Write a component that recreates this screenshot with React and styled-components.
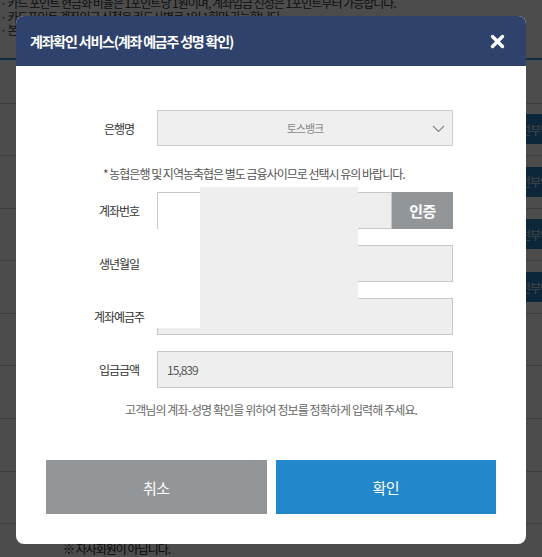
import styled, { createGlobalStyle } from "styled-components";

const GlobalStyle = createGlobalStyle`
  html, body {
    margin: 0;
    padding: 0;
  }
  body {
    background: #fff;
    width: 542px;
    height: 557px;
    overflow: hidden;
    font-family: "Noto Sans CJK KR", "Noto Sans", sans-serif;
  }
`;

/* page behind the dimmed overlay */
const Page = styled.div`
  width: 600px;
  color: #333;
  font-size: 12px;
  letter-spacing: -1px;
`;

const NoticeList = styled.ul`
  margin: -4px 0 0;
  padding: 0;
  list-style: none;
  line-height: 13.5px;
`;

const Notice = styled.li`
  white-space: nowrap;
  &::before {
    content: "· ";
  }
`;

const Table = styled.div`
  margin-top: 21px;
  border-top: 2px solid #3a9ad6;
`;

const Row = styled.div`
  box-sizing: border-box;
  height: ${(p) => (p.$first ? "44px" : "52.6px")};
  border-bottom: 1px solid #cfcfcf;
  display: flex;
  align-items: center;
  padding: 0 0 0 63px;
`;

const RowButton = styled.span`
  margin-left: auto;
  margin-right: 12px;
  width: 78px;
  height: 30px;
  background: #2a7fc4;
  color: #e8e8e8;
  font-size: 12px;
  display: flex;
  align-items: center;
  padding-left: 10px;
  box-sizing: border-box;
`;

const FooterNote = styled.div`
  padding: 16px 0 0 63px;
  color: #222;
`;

/* modal */
const Overlay = styled.div`
  position: fixed;
  inset: 0;
  background: rgba(0, 0, 0, 0.7);
  display: flex;
  justify-content: center;
  align-items: flex-start;
  padding-top: 16px;
`;

const Modal = styled.div`
  position: relative;
  width: 510px;
  background: #fff;
  border-radius: 8px;
  overflow: hidden;
  letter-spacing: -1px;
`;

const Header = styled.div`
  height: 50px;
  background: #2f426c;
  display: flex;
  align-items: center;
  justify-content: space-between;
  padding: 0 21px 0 14px;
`;

const Title = styled.h2`
  margin: 0;
  color: #fff;
  font-size: 14px;
  font-weight: 700;
  letter-spacing: -1.2px;
`;

const CloseButton = styled.button`
  border: 0;
  padding: 0;
  background: none;
  width: 15px;
  height: 15px;
  display: flex;
`;

const Body = styled.div`
  padding: 44px 0 30px;
`;

const Field = styled.div`
  display: grid;
  grid-template-columns: 76px 296px;
  align-items: center;
  padding-left: 65px;
  margin-top: ${(p) => p.$gap || 0}px;
`;

const Label = styled.label`
  text-align: center;
  font-size: 12px;
  color: #333;
`;

const Select = styled.div`
  box-sizing: border-box;
  height: 36px;
  background: #efefef;
  border: 1px solid #cdcdcd;
  display: flex;
  align-items: center;
  justify-content: center;
  position: relative;
  font-size: 11px;
  color: #888;
  svg {
    position: absolute;
    right: 7px;
    top: 14px;
  }
`;

const InputWrap = styled.div`
  display: flex;
  height: 37px;
`;

const Input = styled.div`
  flex: 1;
  box-sizing: border-box;
  height: 37px;
  background: #eeeeee;
  border: 1px solid #c8c8c8;
  display: flex;
  align-items: center;
  padding-left: 9px;
  font-size: 12px;
  color: #555;
`;

const AuthButton = styled.button`
  width: 61px;
  border: 0;
  background: #939699;
  color: #fff;
  font-family: inherit;
  font-size: 15px;
  font-weight: 700;
  letter-spacing: -0.5px;
`;

const Note = styled.p`
  margin: 19px 0 9px;
  padding-left: 87px;
  font-size: 12px;
  line-height: 18px;
  color: #555;
  letter-spacing: -1px;
`;

const Message = styled.p`
  margin: 13px 0 0;
  text-align: center;
  font-size: 12px;
  line-height: 18px;
  color: #666;
  letter-spacing: -0.9px;
`;

const Actions = styled.div`
  margin-top: 41px;
  padding: 0 30px;
  display: grid;
  grid-template-columns: 1fr 1fr;
  gap: 9px;
`;

const ActionButton = styled.button`
  height: 54px;
  border: 0;
  background: ${(p) => (p.$primary ? "#2288cb" : "#939699")};
  color: #fff;
  font-family: inherit;
  font-size: 15px;
  letter-spacing: -0.5px;
`;

/* privacy blocks laid over the form */
const Mask = styled.div`
  position: absolute;
  left: ${(p) => p.$x}px;
  top: ${(p) => p.$y}px;
  width: ${(p) => p.$w}px;
  height: ${(p) => p.$h}px;
  background: ${(p) => p.$color};
`;

const notices = [
  "카드 포인트 현금화 비율은 1포인트당 1원이며, 계좌입금 신청은 1포인트부터 가능합니다.",
  "카드포인트 계좌입금 신청은 카드사별로 1일 1회만 가능합니다.",
  "본인 명의의 계좌로만 입금 신청이 가능합니다.",
];

const rows = [false, true, true, true, true, false, false, false, false];

export default function App() {
  return (
    <>
      <GlobalStyle />
      <Page>
        <NoticeList>
          {notices.map((n) => (
            <Notice key={n}>{n}</Notice>
          ))}
        </NoticeList>
        <Table>
          {rows.map((btn, i) => (
            <Row key={i} $first={i === 0}>
              {btn && <RowButton>전부인출</RowButton>}
            </Row>
          ))}
        </Table>
        <FooterNote>※ 자사회원이 아닙니다.</FooterNote>
      </Page>

      <Overlay>
        <Modal>
          <Header>
            <Title>계좌확인 서비스(계좌 예금주 성명 확인)</Title>
            <CloseButton aria-label="닫기">
              <svg width="15" height="15" viewBox="0 0 15 15">
                <path
                  d="M2.5 2.5 L12.5 12.5 M12.5 2.5 L2.5 12.5"
                  stroke="#fff"
                  strokeWidth="3.4"
                  strokeLinecap="round"
                />
              </svg>
            </CloseButton>
          </Header>
          <Body>
            <Field>
              <Label>은행명</Label>
              <Select>
                토스뱅크
                <svg width="13" height="8" viewBox="0 0 13 8">
                  <polyline points="1,1 6.5,6.5 12,1" fill="none" stroke="#888" strokeWidth="1.2" />
                </svg>
              </Select>
            </Field>
            <Note>* 농협은행 및 지역농축협은 별도 금융사이므로 선택시 유의 바랍니다.</Note>
            <Field>
              <Label>계좌번호</Label>
              <InputWrap>
                <Input />
                <AuthButton>인증</AuthButton>
              </InputWrap>
            </Field>
            <Field $gap={16}>
              <Label>생년월일</Label>
              <Input />
            </Field>
            <Field $gap={16}>
              <Label>계좌예금주</Label>
              <Input />
            </Field>
            <Field $gap={16}>
              <Label>입금금액</Label>
              <Input>15,839</Input>
            </Field>
            <Message>고객님의 계좌-성명 확인을 위하여 정보를 정확하게 입력해 주세요.</Message>
            <Actions>
              <ActionButton>취소</ActionButton>
              <ActionButton $primary>확인</ActionButton>
            </Actions>
          </Body>
          <Mask $x={142} $y={177} $w={42} $h={37} $color="#fff" />
          <Mask $x={141} $y={214} $w={43} $h={98} $color="#fff" />
          <Mask $x={184} $y={171} $w={158} $h={141} $color="#eeeeee" />
        </Modal>
      </Overlay>
    </>
  );
}
